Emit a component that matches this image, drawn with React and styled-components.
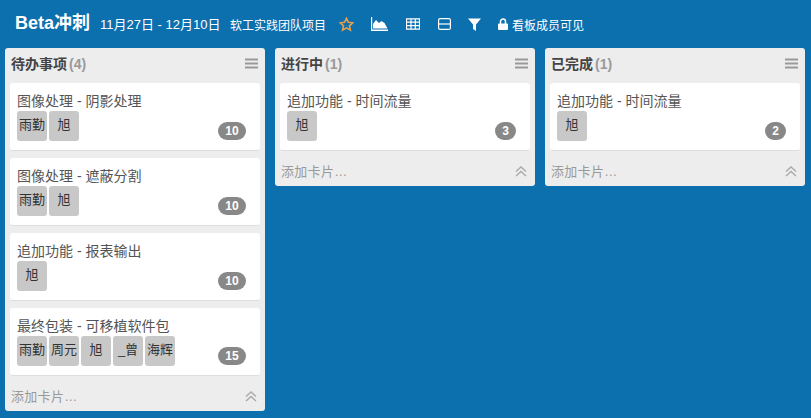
import React from 'react';
import styled, { createGlobalStyle } from 'styled-components';

const Global = createGlobalStyle`
  html, body { margin: 0; padding: 0; height: 100%; }
  body { background: #0c6fae; font-family: "Liberation Sans", "Noto Sans CJK SC", sans-serif; overflow: hidden; }
`;
const Page = styled.div`width: 811px; height: 418px; display: flex; flex-direction: column; background: #0c6fae;`;
const Header = styled.header`height: 48px; flex: none; display: flex; align-items: center; padding: 0 0 0 15px; color: #fff; box-sizing: border-box;`;
const Title = styled.h1`margin: 0 0 3px; font-size: 18px; font-weight: 700; line-height: 20px; width: 85px; white-space: nowrap;`;
const Dates = styled.span`font-size: 13px; width: 130px; white-space: nowrap; margin-bottom: 2px;`;
const Project = styled.span`font-size: 12px; width: 109px; white-space: nowrap;`;
const IconBtn = styled.span`display: inline-flex; width: ${p => p.$w}px; flex: none; align-items: center;`;
const Visibility = styled.span`display: inline-flex; align-items: center; gap: 4px; font-size: 12px; white-space: nowrap;`;
const Board = styled.main`display: flex; align-items: flex-start; gap: 10px; padding: 0 5px;`;
const List = styled.section`width: 260px; background: #ededed; border-radius: 3px; box-sizing: border-box; padding: 0 5px;`;
const ListHead = styled.div`height: 35px; display: flex; align-items: center; justify-content: space-between; padding: 0 0 4px 1px; box-sizing: border-box;`;
const ListTitle = styled.h2`margin: 0; font-size: 14px; font-weight: 700; color: #444; line-height: 1;`;
const Count = styled.span`color: #999; margin-left: 2px;`;
const Cards = styled.div`display: flex; flex-direction: column; gap: 7px;`;
const Card = styled.article`height: 68px; box-sizing: border-box; background: #fff; border-radius: 3px; border-bottom: 1px solid #ddd; padding: 9px 7px 0; position: relative;`;
const CardTitle = styled.div`font-size: 14px; line-height: 18px; color: #555; white-space: nowrap;`;
const Members = styled.div`display: flex; gap: 2px; margin-top: 1px;`;
const Member = styled.span`width: 30px; height: 30px; border-radius: 3px; background: #c8c8c8; color: #333; font-size: 13px; display: flex; justify-content: center; padding-top: 6px; box-sizing: border-box; line-height: 16px; white-space: nowrap;`;
const Badge = styled.span`position: absolute; right: 14px; bottom: 10px; height: 18px; padding: 0 3px; border-radius: 9px; background: #888; color: #fff; font-size: 12px; font-weight: 700; display: flex; align-items: center; justify-content: center; ${p => p.$wide ? 'width: 22px;' : 'width: 15px;'}`;
const Foot = styled.div`height: 35px; box-sizing: border-box; display: flex; align-items: center; justify-content: space-between; color: #999; font-size: 13px; padding: 3px 3px 0 1px;`;
const AddLabel = styled.span`letter-spacing: 0.3px;`;

const Menu = () => (
  <svg width="13" height="11" viewBox="0 0 13 11" style={{ marginRight: 2 }}>
    <path d="M0 1.5h13M0 5.500h13M0 9.500h13" stroke="#999" strokeWidth="2" />
  </svg>
);
const Chevrons = () => (
  <svg width="12" height="11" viewBox="0 0 12 11" fill="none" stroke="#aaa" strokeWidth="1.400" style={{ marginTop: 2 }}>
    <path d="M1 5.500 6 1l5 4.500M1 10 6 5.500 11 10" />
  </svg>
);
const lists = [
  { name: '待办事项', n: 4, cards: [
    { t: '图像处理 - 阴影处理', m: ['雨勤', '旭'], b: 10 },
    { t: '图像处理 - 遮蔽分割', m: ['雨勤', '旭'], b: 10 },
    { t: '追加功能 - 报表输出', m: ['旭'], b: 10 },
    { t: '最终包装 - 可移植软件包', m: ['雨勤', '周元', '旭', '_曾', '海辉'], b: 15 },
  ] },
  { name: '进行中', n: 1, cards: [{ t: '追加功能 - 时间流量', m: ['旭'], b: 3 }] },
  { name: '已完成', n: 1, cards: [{ t: '追加功能 - 时间流量', m: ['旭'], b: 2 }] },
];

export default function App() {
  return (
    <Page>
      <Global />
      <Header>
        <Title>Beta冲刺</Title>
        <Dates>11月27日 - 12月10日</Dates>
        <Project>软工实践团队项目</Project>
        <IconBtn $w={32}>
          <svg width="15" height="15" viewBox="0 0 15 15"><path d="M7.500 1.300l1.900 4 4.300.5-3.200 3 .9 4.300-3.900-2.200-3.900 2.200.9-4.300-3.200-3 4.300-.5z" fill="none" stroke="#e8a04a" strokeWidth="1.600" /></svg>
        </IconBtn>
        <IconBtn $w={35}>
          <svg width="17" height="14" viewBox="0 0 17 14"><path d="M0 0h1.200v12.500H17V14H0z" fill="#fff" /><path d="M2 11.500V7l3-4 3 3 2.500-2 3 2 3 5.500z" fill="#fff" /></svg>
        </IconBtn>
        <IconBtn $w={32}>
          <svg width="14" height="12" viewBox="0 0 14 12" fill="none" stroke="#fff" strokeWidth="1.200"><path d="M.5.800h13v10.400H.5zM.5 4.200h13M.5 7.700h13M5 .8v10.400M9.300 .8v10.400" /></svg>
        </IconBtn>
        <IconBtn $w={30}>
          <svg width="13" height="12" viewBox="0 0 13 12" fill="none" stroke="#fff" strokeWidth="1.200"><rect x=".6" y=".6" width="11.800" height="10.800" rx="1.500" /><path d="M.6 6h11.800" /></svg>
        </IconBtn>
        <IconBtn $w={30}>
          <svg width="13" height="13" viewBox="0 0 13 13"><path d="M0 .5h13L8 6.500V13L5 11V6.500z" fill="#fff" /></svg>
        </IconBtn>
        <Visibility>
          <svg width="10" height="12" viewBox="0 0 10 12"><path d="M1 5.500h8a1 1 0 0 1 1 1V11a1 1 0 0 1-1 1H1a1 1 0 0 1-1-1V6.500a1 1 0 0 1 1-1z" fill="#fff" /><path d="M2.500 6V3.500a2.500 2.500 0 0 1 5 0V6" fill="none" stroke="#fff" strokeWidth="1.500" /></svg>
          看板成员可见
        </Visibility>
      </Header>
      <Board>
        {lists.map(l => (
          <List key={l.name}>
            <ListHead>
              <ListTitle>{l.name}<Count>({l.n})</Count></ListTitle>
              <Menu />
            </ListHead>
            <Cards>
              {l.cards.map(c => (
                <Card key={c.t}>
                  <CardTitle>{c.t}</CardTitle>
                  <Members>{c.m.map(m => <Member key={m}>{m}</Member>)}</Members>
                  <Badge $wide={c.b > 9}>{c.b}</Badge>
                </Card>
              ))}
            </Cards>
            <Foot><AddLabel>添加卡片…</AddLabel><Chevrons /></Foot>
          </List>
        ))}
      </Board>
    </Page>
  );
}
